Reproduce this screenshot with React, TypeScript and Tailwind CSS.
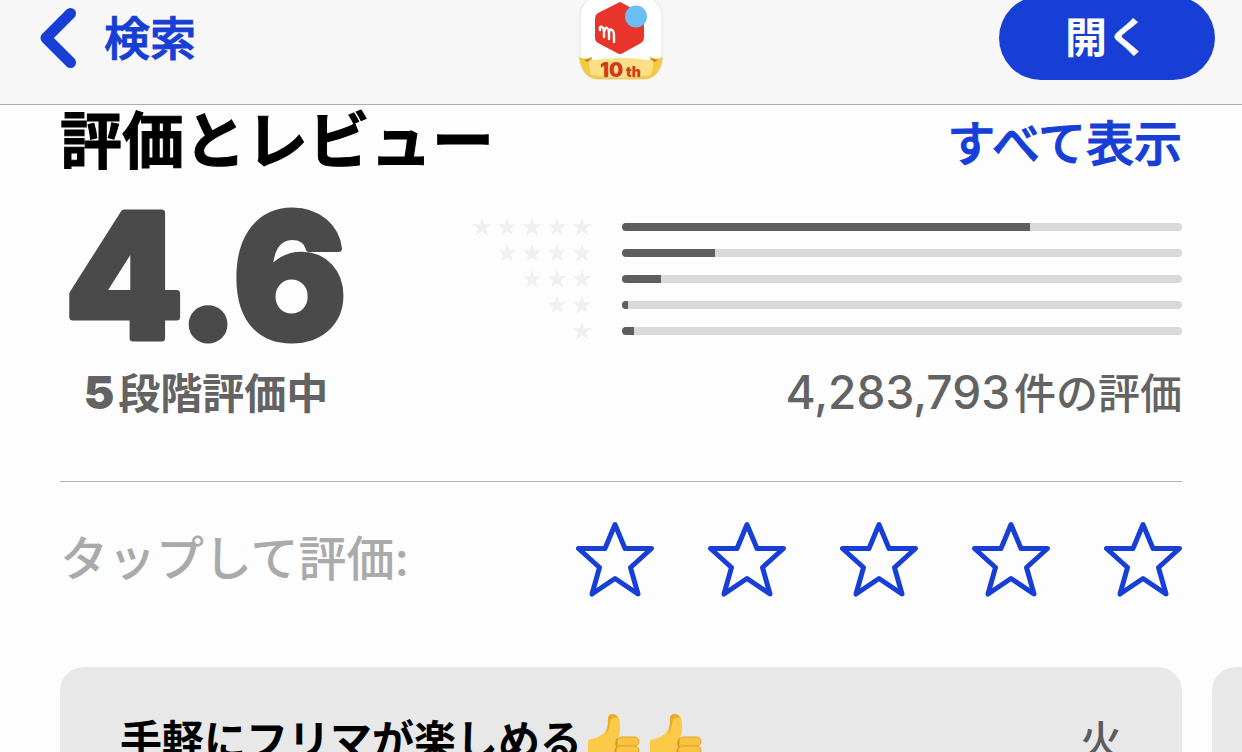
import React, { useState } from "react";

const ratings = [
  { stars: 5, percent: 72.9 },
  { stars: 4, percent: 16.6 },
  { stars: 3, percent: 7 },
  { stars: 2, percent: 1.1 },
  { stars: 1, percent: 2.1 },
];

const AppIcon = () => (
  <svg viewBox="0 0 86 84" className="h-[84px] w-[86px]" role="img" aria-label="メルカリ">
    <rect x="2" y="0.5" width="82" height="83" rx="19" fill="#fff" stroke="#e3e3e3" />
    <path
      d="M39 7.5 Q42 5 45 7.5 L63 17 Q66 19 66 22 V42 Q66 45 63 47 L45 57 Q42 59 39 57 L20 47 Q17 45 17 42 V22 Q17 19 20 17 Z"
      fill="#e7352b"
    />
    <circle cx="58" cy="20.5" r="11" fill="#6abdf5" />
    <path
      d="M22 34 Q21 30 24 31 Q26 32 26 36 V41 M26 36 Q27 31 29 32 Q31 33 31 37 V43 M31 37 Q32 32 34 34 Q36 35 36 40 V46"
      fill="none"
      stroke="#fff"
      strokeWidth="2.4"
      strokeLinecap="round"
      strokeLinejoin="round"
    />
    <path d="M1 61 Q8 64 14 61 V64 H72 V61 Q79 64 85 61 Q82 81 68 83 H18 Q4 81 1 61 Z" fill="#f5c842" />
    <path d="M10 65 Q43 59 76 65 L73 79 Q43 85 13 79 Z" fill="#f9df86" />
    <path d="M6 64 Q10 64 14 61 L10 66 Z M80 64 Q76 64 72 61 L76 66 Z" fill="#b67a25" />
    <text x="22" y="81" fontFamily="Inter, sans-serif" fontWeight="900" fontSize="20" fill="#cf3a1c">
      10
    </text>
    <text x="48" y="81" fontFamily="Inter, sans-serif" fontWeight="900" fontSize="14" fill="#cf3a1c">
      th
    </text>
  </svg>
);

// rounded display numerals
const Score = () => (
  <svg viewBox="0 0 292 152" className="h-[152px] w-[292px]" role="img" aria-label="4.6">
    <text
      x="146"
      y="139"
      textAnchor="middle"
      fontFamily="Inter, sans-serif"
      fontWeight="800"
      fontSize="172"
      fill="#4a4a4a"
      stroke="#4a4a4a"
      strokeWidth="7"
      strokeLinejoin="round"
    >
      4.6
    </text>
  </svg>
);

const SmallStar = () => (
  <svg viewBox="0 0 20 20" className="h-5 w-5" fill="#f0f0f0" aria-hidden="true">
    <path d="M10 0.5 L12.3 7.2 H19.5 L13.8 11.5 L15.9 18.5 L10 14.4 L4.1 18.5 L6.2 11.5 L0.5 7.2 H7.7 Z" />
  </svg>
);

const ThumbsUp = () => (
  <svg viewBox="0 0 54 58" className="h-[58px] w-[54px]" role="img" aria-label="👍">
    <path
      d="M2 27 Q13 25 18 20 Q22 15 22 8 Q21 1 27 1 Q34 1 34 12 Q35 19 32 25 L34 50 Q28 56 18 54 Q10 53 2 51 Z"
      fill="#fbca48"
    />
    <path d="M22 8 Q21 1 27 1 Q30 1 32 5 Q26 3 24 9 Q24 17 19 22 Q22 16 22 8 Z" fill="#e9a92f" />
    <path d="M32 25 Q29 29 31 34 Q28 38 31 42 Q29 47 33 51" fill="none" stroke="#dc9428" strokeWidth="2" />
    <rect x="31" y="24" width="22" height="9" rx="4.5" fill="#fbc440" stroke="#e5a22d" />
    <rect x="30" y="33" width="23" height="9" rx="4.5" fill="#fbc440" stroke="#e5a22d" />
    <rect x="31" y="42" width="20" height="8" rx="4" fill="#fbc440" stroke="#e5a22d" />
    <rect x="32" y="49" width="16" height="7" rx="3.5" fill="#fbc440" stroke="#e5a22d" />
  </svg>
);

const App = () => {
  const [myRating, setMyRating] = useState(0);

  return (
    <div className="flex h-screen flex-col overflow-hidden bg-[#fdfdfd] font-['Inter','Noto_Sans_CJK_JP',sans-serif] text-black">
      <header className="border-b border-[#acacac] bg-[#f7f7f7] px-[27px] pb-6">
        <div className="-mt-1 grid grid-cols-[1fr_auto_1fr] items-center">
          <a
            href="#search"
            className="flex items-center gap-7 pl-[13px] text-[46px] leading-[60px] font-medium text-[#173fd6] [-webkit-text-stroke:1px]"
          >
            <svg viewBox="0 0 36 60" className="h-[60px] w-9" fill="none" aria-hidden="true">
              <path d="M30.5 5.5 L6 30 L30.5 54.5" stroke="#173fd6" strokeWidth="11" strokeLinecap="round" strokeLinejoin="round" />
            </svg>
            検索
          </a>
          <AppIcon />
          <button
            type="button"
            className="h-[84px] w-[216px] justify-self-end rounded-full bg-[#173fd6] text-[42px] leading-[60px] font-bold text-white"
          >
            開く
          </button>
        </div>
      </header>

      <main className="flex min-h-0 flex-1 flex-col">
        <section className="px-[60px]">
          <div className="flex h-[74px] items-center justify-between">
            <h2 className="text-[62px] leading-[74px] font-bold [-webkit-text-stroke:1px]">評価とレビュー</h2>
            <a href="#all" className="pt-1 text-[48px] leading-[60px] font-medium text-[#173fd6] [-webkit-text-stroke:1px]">
              すべて表示
            </a>
          </div>

          <div className="mt-5 flex items-center justify-between">
            <Score />
            <ul className="flex flex-col gap-[6px] pt-2">
              {ratings.map(({ stars, percent }) => (
                <li key={stars} className="flex items-center justify-end gap-[30px]" aria-label={`星${stars}`}>
                  <div className="flex gap-[5px]">
                    {Array.from({ length: stars }, (_, i) => (
                      <SmallStar key={i} />
                    ))}
                  </div>
                  <div className="h-2 w-[560px] overflow-hidden rounded-full bg-[#d9d9d9]">
                    <div className="h-full bg-[#5e5e5e]" style={{ width: `${percent}%` }} />
                  </div>
                </li>
              ))}
            </ul>
          </div>

          <div className="mt-3 flex items-center justify-between text-[42px] leading-[58px] text-[#636363]">
            <p className="w-[292px] text-center font-bold">
              <span className="mr-1 text-[46px] font-black">5</span>
              段階評価中
            </p>
            <p className="font-medium">
              <span className="mr-1 text-[46px]">4,283,793</span>
              件の評価
            </p>
          </div>

          <div className="mt-[58px] flex items-center justify-between border-t border-[#b4b4b4] pt-[39px]">
            <p className="text-[48px] leading-[76px] font-medium text-[#aaaaaa]">タップして評価:</p>
            <div className="flex gap-[54px]">
              {[1, 2, 3, 4, 5].map((value) => (
                <button key={value} type="button" aria-label={`${value}つ星`} onClick={() => setMyRating(value)}>
                  <svg viewBox="0 0 78 76" className="h-[76px] w-[78px]" fill={value <= myRating ? "#173fd6" : "none"}>
                    <path
                      d="M39 3.5 L49 27.5 H75.5 L54.5 46.5 L62 73 L39 57.5 L16 73 L23.5 46.5 L2.5 27.5 H29 Z"
                      stroke="#173fd6"
                      strokeWidth="5"
                      strokeLinejoin="round"
                    />
                  </svg>
                </button>
              ))}
            </div>
          </div>
        </section>

        <section className="mt-[70px] flex min-h-0 flex-1 gap-[30px] overflow-hidden pl-[60px]">
          <article className="w-[calc(100vw-120px)] shrink-0 rounded-t-3xl bg-[#e8e8e8] px-[60px] pt-[46px]">
            <div className="flex items-start justify-between text-[42px] leading-[56px]">
              <h3 className="flex items-start gap-1 font-bold">
                手軽にフリマが楽しめる
                <span className="flex gap-2">
                  <ThumbsUp />
                  <ThumbsUp />
                </span>
              </h3>
              <p className="font-medium text-[#5c5c5c]">火</p>
            </div>
          </article>
          <article className="w-[calc(100vw-120px)] shrink-0 rounded-t-3xl bg-[#e8e8e8]" />
        </section>
      </main>
    </div>
  );
};

export default App;
